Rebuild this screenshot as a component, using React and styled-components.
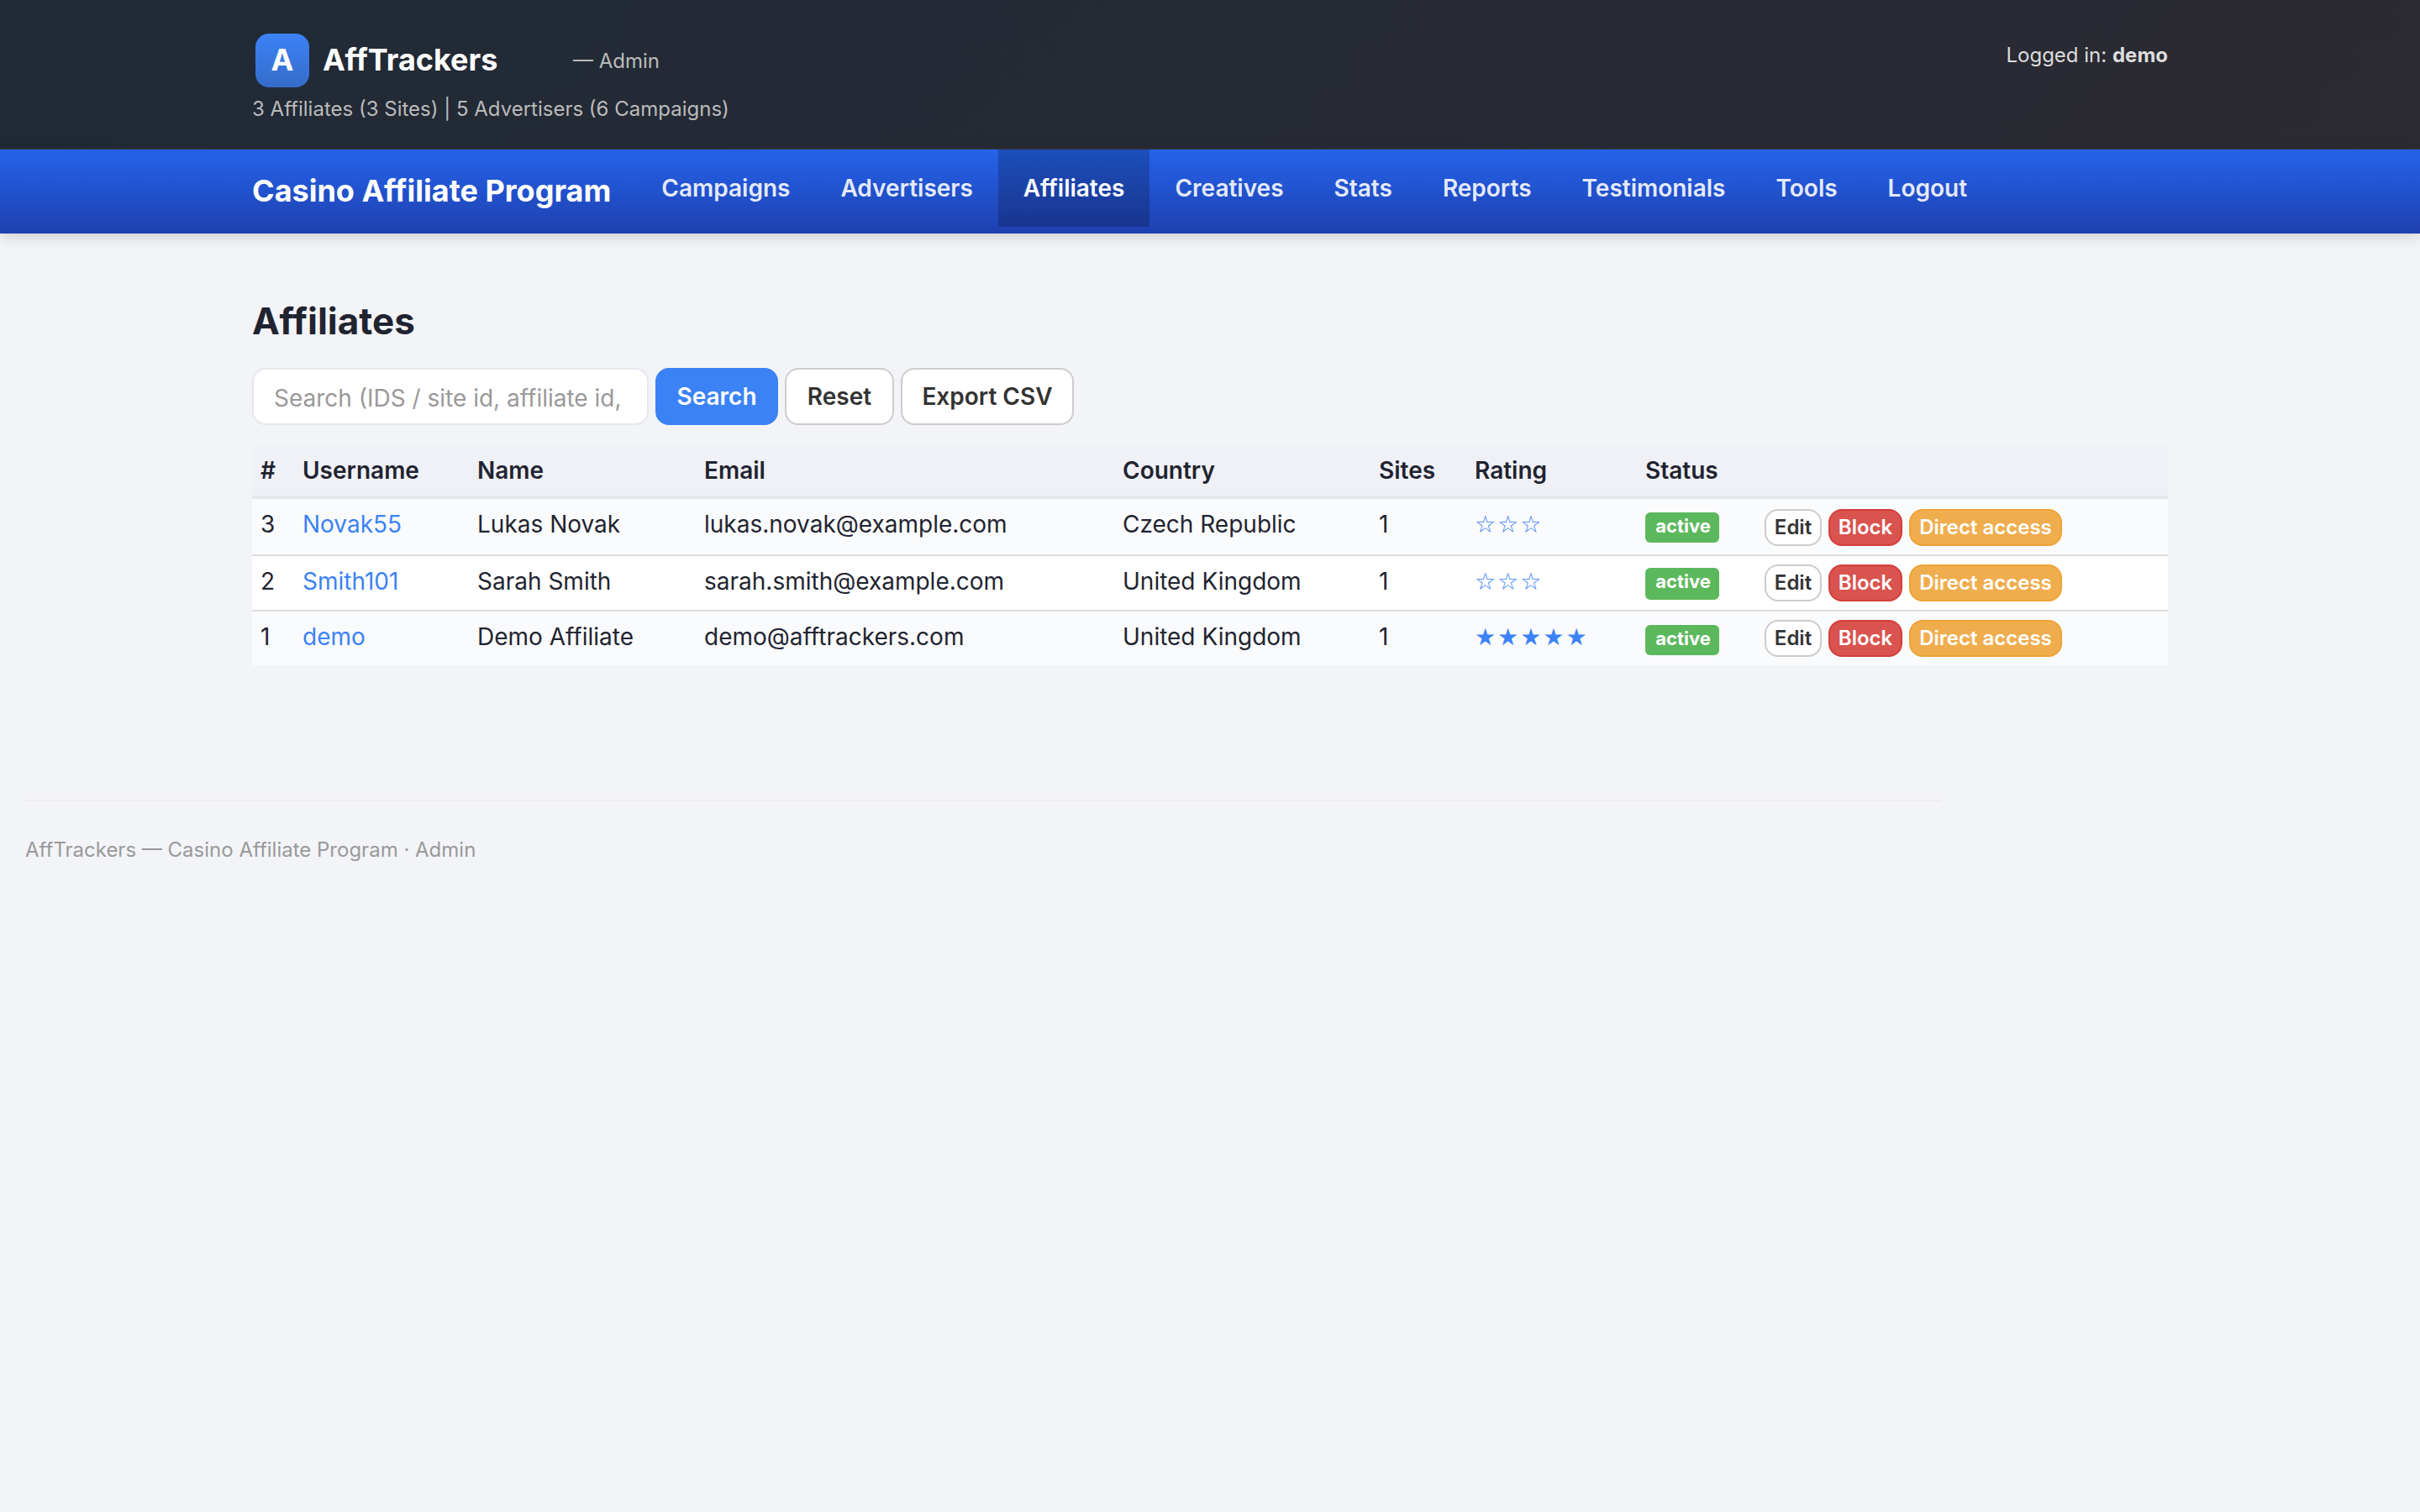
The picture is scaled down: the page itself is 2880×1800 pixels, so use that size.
import React from 'react';
import styled, { createGlobalStyle } from 'styled-components';

const NAV_ITEMS = [
  'Campaigns',
  'Advertisers',
  'Affiliates',
  'Creatives',
  'Stats',
  'Reports',
  'Testimonials',
  'Tools',
  'Logout',
];

const COLUMNS = [
  { label: '#', width: 50 },
  { label: 'Username', width: 208 },
  { label: 'Name', width: 270 },
  { label: 'Email', width: 498 },
  { label: 'Country', width: 305 },
  { label: 'Sites', width: 114 },
  { label: 'Rating', width: 203 },
  { label: 'Status', width: 142 },
  { label: '', width: 490 },
];

const AFFILIATES = [
  {
    id: 3,
    username: 'Novak55',
    name: 'Lukas Novak',
    email: 'lukas.novak@example.com',
    country: 'Czech Republic',
    sites: 1,
    rating: '☆☆☆',
  },
  {
    id: 2,
    username: 'Smith101',
    name: 'Sarah Smith',
    email: 'sarah.smith@example.com',
    country: 'United Kingdom',
    sites: 1,
    rating: '☆☆☆',
  },
  {
    id: 1,
    username: 'demo',
    name: 'Demo Affiliate',
    email: 'demo@afftrackers.com',
    country: 'United Kingdom',
    sites: 1,
    rating: '★★★★★',
  },
];

function Header() {
  return (
    <TopBar>
      <TopInner>
        <div>
          <BrandRow>
            <LogoTile>A</LogoTile>
            <BrandName>AffTrackers</BrandName>
            <BrandRole>— Admin</BrandRole>
          </BrandRow>
          <Summary>3 Affiliates (3 Sites) | 5 Advertisers (6 Campaigns)</Summary>
        </div>
        <LoggedIn>
          Logged in: <strong>demo</strong>
        </LoggedIn>
      </TopInner>
    </TopBar>
  );
}

function Navigation() {
  return (
    <NavBar>
      <NavInner>
        <NavTitle>Casino Affiliate Program</NavTitle>
        {NAV_ITEMS.map((item) => (
          <NavLink key={item} href="#" $active={item === 'Affiliates'}>
            {item}
          </NavLink>
        ))}
      </NavInner>
    </NavBar>
  );
}

function AffiliateTable() {
  return (
    <Table>
      <colgroup>
        {COLUMNS.map((col, index) => (
          <Column key={index} $width={col.width} />
        ))}
      </colgroup>
      <thead>
        <tr>
          {COLUMNS.map((col, index) => (
            <HeadCell key={index}>{col.label}</HeadCell>
          ))}
        </tr>
      </thead>
      <tbody>
        {AFFILIATES.map((affiliate) => (
          <Row key={affiliate.id}>
            <Cell>{affiliate.id}</Cell>
            <Cell>
              <UserLink href="#">{affiliate.username}</UserLink>
            </Cell>
            <Cell>{affiliate.name}</Cell>
            <Cell>{affiliate.email}</Cell>
            <Cell>{affiliate.country}</Cell>
            <Cell>{affiliate.sites}</Cell>
            <Cell>
              <Stars>{affiliate.rating}</Stars>
            </Cell>
            <StatusCell>
              <Badge>active</Badge>
            </StatusCell>
            <ActionCell>
              <Actions>
                <SmallButton $width={68}>Edit</SmallButton>
                <SmallButton $width={88} $variant="danger">
                  Block
                </SmallButton>
                <SmallButton $width={182} $variant="warning">
                  Direct access
                </SmallButton>
              </Actions>
            </ActionCell>
          </Row>
        ))}
      </tbody>
    </Table>
  );
}

function App() {
  return (
    <>
      <GlobalStyle />
      <Header />
      <Navigation />
      <Main>
        <PageTitle>Affiliates</PageTitle>
        <SearchForm onSubmit={(e) => e.preventDefault()}>
          <SearchInput type="text" placeholder="Search (IDS / site id, affiliate id," />
          <Button type="submit" $primary $width={146}>
            Search
          </Button>
          <Button type="button" $width={130}>
            Reset
          </Button>
          <Button type="button" $width={206}>
            Export CSV
          </Button>
        </SearchForm>
        <AffiliateTable />
      </Main>
      <Footer>AffTrackers — Casino Affiliate Program · Admin</Footer>
    </>
  );
}

export default App;

const GlobalStyle = createGlobalStyle`
  * {
    box-sizing: border-box;
  }

  body {
    margin: 0;
    background: #f3f4f8;
    color: #1f2430;
    font-family: Inter, "Liberation Sans", sans-serif;
    font-size: 28px;
    line-height: 40px;
  }
`;

const TopBar = styled.header`
  height: 178px;
  background: linear-gradient(135deg, #1f2a36 0%, #2c2a33 100%);
  border-bottom: 2px solid #32333c;
`;

const TopInner = styled.div`
  display: flex;
  justify-content: space-between;
  width: 2280px;
  margin: 0 auto;
  padding-top: 40px;
`;

const BrandRow = styled.div`
  display: flex;
  align-items: center;
  height: 64px;
  padding-left: 4px;
`;

const LogoTile = styled.span`
  width: 64px;
  height: 64px;
  border-radius: 16px;
  background: linear-gradient(180deg, #3b82f6, #356cc9);
  color: #fff;
  font-size: 36px;
  font-weight: 700;
  line-height: 62px;
  text-align: center;
`;

const BrandName = styled.span`
  width: 298px;
  height: 64px;
  margin-left: 16px;
  color: #fff;
  font-size: 36px;
  font-weight: 700;
  line-height: 62px;
`;

const BrandRole = styled.span`
  padding-top: 2px;
  color: #bbb;
  font-size: 24px;
`;

const Summary = styled.div`
  margin-top: 9px;
  color: #bbb;
  font-size: 24px;
  line-height: 34px;
`;

const LoggedIn = styled.div`
  margin-top: 9px;
  color: #ddd;
  font-size: 24px;
  line-height: 34px;
`;

const NavBar = styled.nav`
  height: 100px;
  background: linear-gradient(180deg, #2563eb, #1e40af);
  box-shadow: 0 4px 16px rgba(0, 0, 0, 0.15);
`;

const NavInner = styled.div`
  display: flex;
  align-items: flex-start;
  width: 2280px;
  margin: 0 auto;
`;

const NavTitle = styled.span`
  margin-right: 30px;
  color: #fff;
  font-size: 36px;
  font-weight: 700;
  line-height: 98px;
`;

const NavLink = styled.a`
  height: 92px;
  padding: 0 30px;
  background: ${(props) => (props.$active ? 'rgba(0, 0, 0, 0.2)' : 'transparent')};
  color: ${(props) => (props.$active ? '#fff' : 'rgba(255, 255, 255, 0.9)')};
  font-weight: 600;
  line-height: 92px;
  text-decoration: none;
`;

const Main = styled.main`
  width: 2280px;
  margin: 0 auto;
  padding-top: 72px;
`;

const PageTitle = styled.h1`
  margin: 0 0 24px;
  font-size: 44px;
  font-weight: 700;
  line-height: 64px;
`;

const SearchForm = styled.form`
  display: flex;
  gap: 8px;
  margin-bottom: 24px;
`;

const SearchInput = styled.input`
  width: 472px;
  height: 68px;
  padding: 3px 24px 0;
  border: 2px solid #e5e7ed;
  border-radius: 16px;
  background: #fff;
  font-family: inherit;
  font-size: 28px;
  outline: none;

  &::placeholder {
    color: #999;
    opacity: 1;
  }
`;

const Button = styled.button`
  width: ${(props) => props.$width}px;
  height: 68px;
  padding: 0;
  border: 2px solid ${(props) => (props.$primary ? '#3b82f6' : '#ccc')};
  border-radius: 16px;
  background: ${(props) => (props.$primary ? '#3b82f6' : '#fff')};
  color: ${(props) => (props.$primary ? '#fff' : '#333')};
  font-family: inherit;
  font-size: 28px;
  font-weight: 600;
  white-space: nowrap;
`;

const Table = styled.table`
  width: 2280px;
  border-spacing: 0;
  table-layout: fixed;
`;

const Column = styled.col`
  width: ${(props) => props.$width}px;
`;

const HeadCell = styled.th`
  height: 64px;
  padding: 0 10px;
  border-bottom: 4px solid #e5e7ed;
  background: #f0f1f7;
  font-weight: 600;
  text-align: left;
`;

const Cell = styled.td`
  padding: 10px 10px 0;
  vertical-align: top;
`;

const StatusCell = styled(Cell)`
  padding-top: 14px;
`;

const ActionCell = styled(Cell)`
  padding-top: 10px;
`;

const Row = styled.tr`
  height: 66px;
  background: #fff;

  &:nth-child(odd) {
    background: #fafbfd;
  }

  & > td {
    border-bottom: 2px solid #ddd;
  }

  &:first-child {
    height: 68px;
  }

  &:first-child > ${StatusCell} {
    padding-top: 16px;
  }

  &:first-child > ${ActionCell} {
    padding-top: 12px;
  }

  &:last-child {
    height: 64px;
  }

  &:last-child > td {
    border-bottom: none;
  }

  &:last-child > ${StatusCell} {
    padding-top: 16px;
  }
`;

const UserLink = styled.a`
  color: #3b82f6;
  text-decoration: none;
`;

const Stars = styled.span`
  color: #3b82f6;
  font-family: "Liberation Sans", "DejaVu Sans", sans-serif;
  letter-spacing: 2px;
`;

const Badge = styled.span`
  display: block;
  width: 88px;
  height: 36px;
  padding-left: 2px;
  border-radius: 6px;
  background: #5cb85c;
  color: #fff;
  font-size: 22px;
  font-weight: 700;
  line-height: 33px;
  text-align: center;

  ${Row}:nth-child(2) & {
    height: 38px;
  }
`;

const Actions = styled.div`
  display: flex;
  gap: 8px;
`;

const VARIANTS = {
  default: { background: '#fff', border: '#ccc', color: '#333' },
  danger: { background: '#d9534f', border: '#d43f3a', color: '#fff' },
  warning: { background: '#f0ad4e', border: '#eea236', color: '#fff' },
};

const variant = (key) => (props) => VARIANTS[props.$variant || 'default'][key];

const SmallButton = styled.button`
  width: ${(props) => props.$width}px;
  height: 44px;
  padding: 0 0 2px;
  border: 2px solid ${variant('border')};
  border-radius: 16px;
  background: ${variant('background')};
  color: ${variant('color')};
  font-family: inherit;
  font-size: 24px;
  font-weight: 600;
  white-space: nowrap;
`;

const Footer = styled.footer`
  width: 2280px;
  margin: 160px 0 0 30px;
  padding-top: 41px;
  border-top: 2px solid #eee;
  color: #999;
  font-size: 24px;
  line-height: 34px;
`;
